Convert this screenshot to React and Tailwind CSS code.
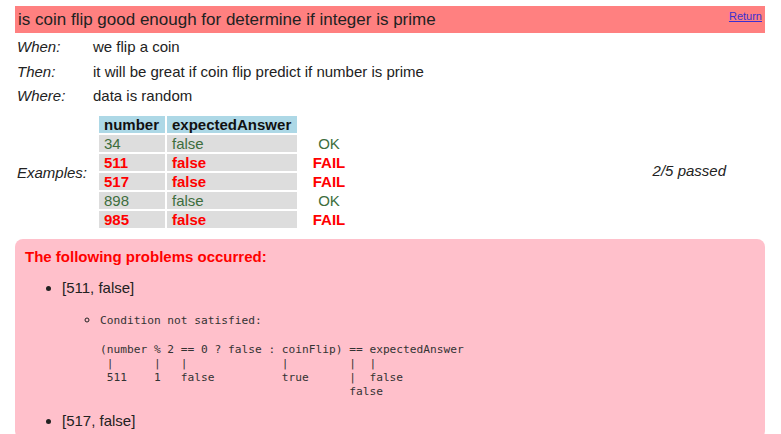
import React from "react";

const rows = [
  { n: "34", a: "false", ok: true },
  { n: "511", a: "false", ok: false },
  { n: "517", a: "false", ok: false },
  { n: "898", a: "false", ok: true },
  { n: "985", a: "false", ok: false },
];

const code = [
  "(number % 2 == 0 ? false : coinFlip) == expectedAnswer",
  " |      |   |              |         |  |",
  " 511    1   false          true      |  false",
  "                                     false",
].join("\n");

export default function App() {
  return (
    <div className="min-h-[434px] bg-white px-[15px] pt-[6px] pr-[16px] font-['Liberation_Sans',Arial,sans-serif] text-[#222]">
      <div className="flex h-[27px] items-start justify-between bg-[#ff8080] pl-[3px] pr-[3px]">
        <span className="text-[17px] leading-[27px] text-[#222]">
          is coin flip good enough for determine if integer is prime
        </span>
        <a href="#" className="mt-[3px] text-[11px] leading-[14px] text-[#3b30d0] underline">
          Return
        </a>
      </div>

      <div className="grid grid-cols-[78px_1fr] pt-[2px] text-[15px]">
        {[
          ["When:", "we flip a coin"],
          ["Then:", "it will be great if coin flip predict if number is prime"],
          ["Where:", "data is random"],
        ].map(([k, v]) => (
          <React.Fragment key={k}>
            <div className="h-[24.5px] pl-[2px] leading-[24.5px] italic">{k}</div>
            <div className="h-[24.5px] leading-[24.5px]">{v}</div>
          </React.Fragment>
        ))}
        <div className="flex items-center pl-[2px] italic">Examples:</div>
        <div className="flex items-center pt-[7px] pb-[10px]">
          <div className="ml-[6px] flex flex-col gap-[2px]">
            <div className="flex gap-[2px]">
              <div className="h-[17px] w-[66px] bg-[#add8e6] pl-[5px] text-[15px] font-bold leading-[17px] text-[#111]">number</div>
              <div className="h-[17px] w-[130px] bg-[#add8e6] pl-[5px] text-[15px] font-bold leading-[17px] text-[#111]">expectedAnswer</div>
            </div>
            {rows.map((r) => (
              <div key={r.n} className="flex gap-[2px]">
                <div
                  className={`h-[17px] w-[66px] bg-[#dddddd] pl-[5px] leading-[17px] ${
                    r.ok ? "text-[#3d6e3d]" : "font-bold text-[#ff0000]"
                  }`}
                >
                  {r.n}
                </div>
                <div
                  className={`h-[17px] w-[130px] bg-[#dddddd] pl-[5px] leading-[17px] ${
                    r.ok ? "text-[#3d6e3d]" : "font-bold text-[#ff0000]"
                  }`}
                >
                  {r.a}
                </div>
                <div
                  className={`h-[17px] w-[60px] text-center leading-[17px] ${
                    r.ok ? "text-[#3d6e3d]" : "font-bold text-[#ff0000]"
                  }`}
                >
                  {r.ok ? "OK" : "FAIL"}
                </div>
              </div>
            ))}
          </div>
          <div className="ml-auto mr-[39px] italic">2/5 passed</div>
        </div>
      </div>

      <div className="mt-[1px] rounded-[8px] bg-[#ffc0cb] pl-[10px] pt-[8px] pb-[8px]">
        <div className="text-[15px] font-bold leading-[20px] text-[#ff0000]">
          The following problems occurred:
        </div>
        <ul className="mt-[11px] list-disc pl-[37px] text-[15px] leading-[20px]">
          <li>
            [511, false]
            <ul className="mt-[11px] list-[circle] pl-[38px] text-[14px] leading-[20px]">
              <li>
                <span className="font-['DejaVu_Sans_Mono',monospace] text-[11.2px] leading-[14px] text-[#333]">
                  Condition not satisfied:
                </span>
                <pre className="mt-[14px] font-['DejaVu_Sans_Mono',monospace] text-[11.2px] leading-[14px] text-[#333]">
                  {code}
                </pre>
              </li>
            </ul>
          </li>
          <li className="mt-[12px]">[517, false]</li>
        </ul>
      </div>
    </div>
  );
}
